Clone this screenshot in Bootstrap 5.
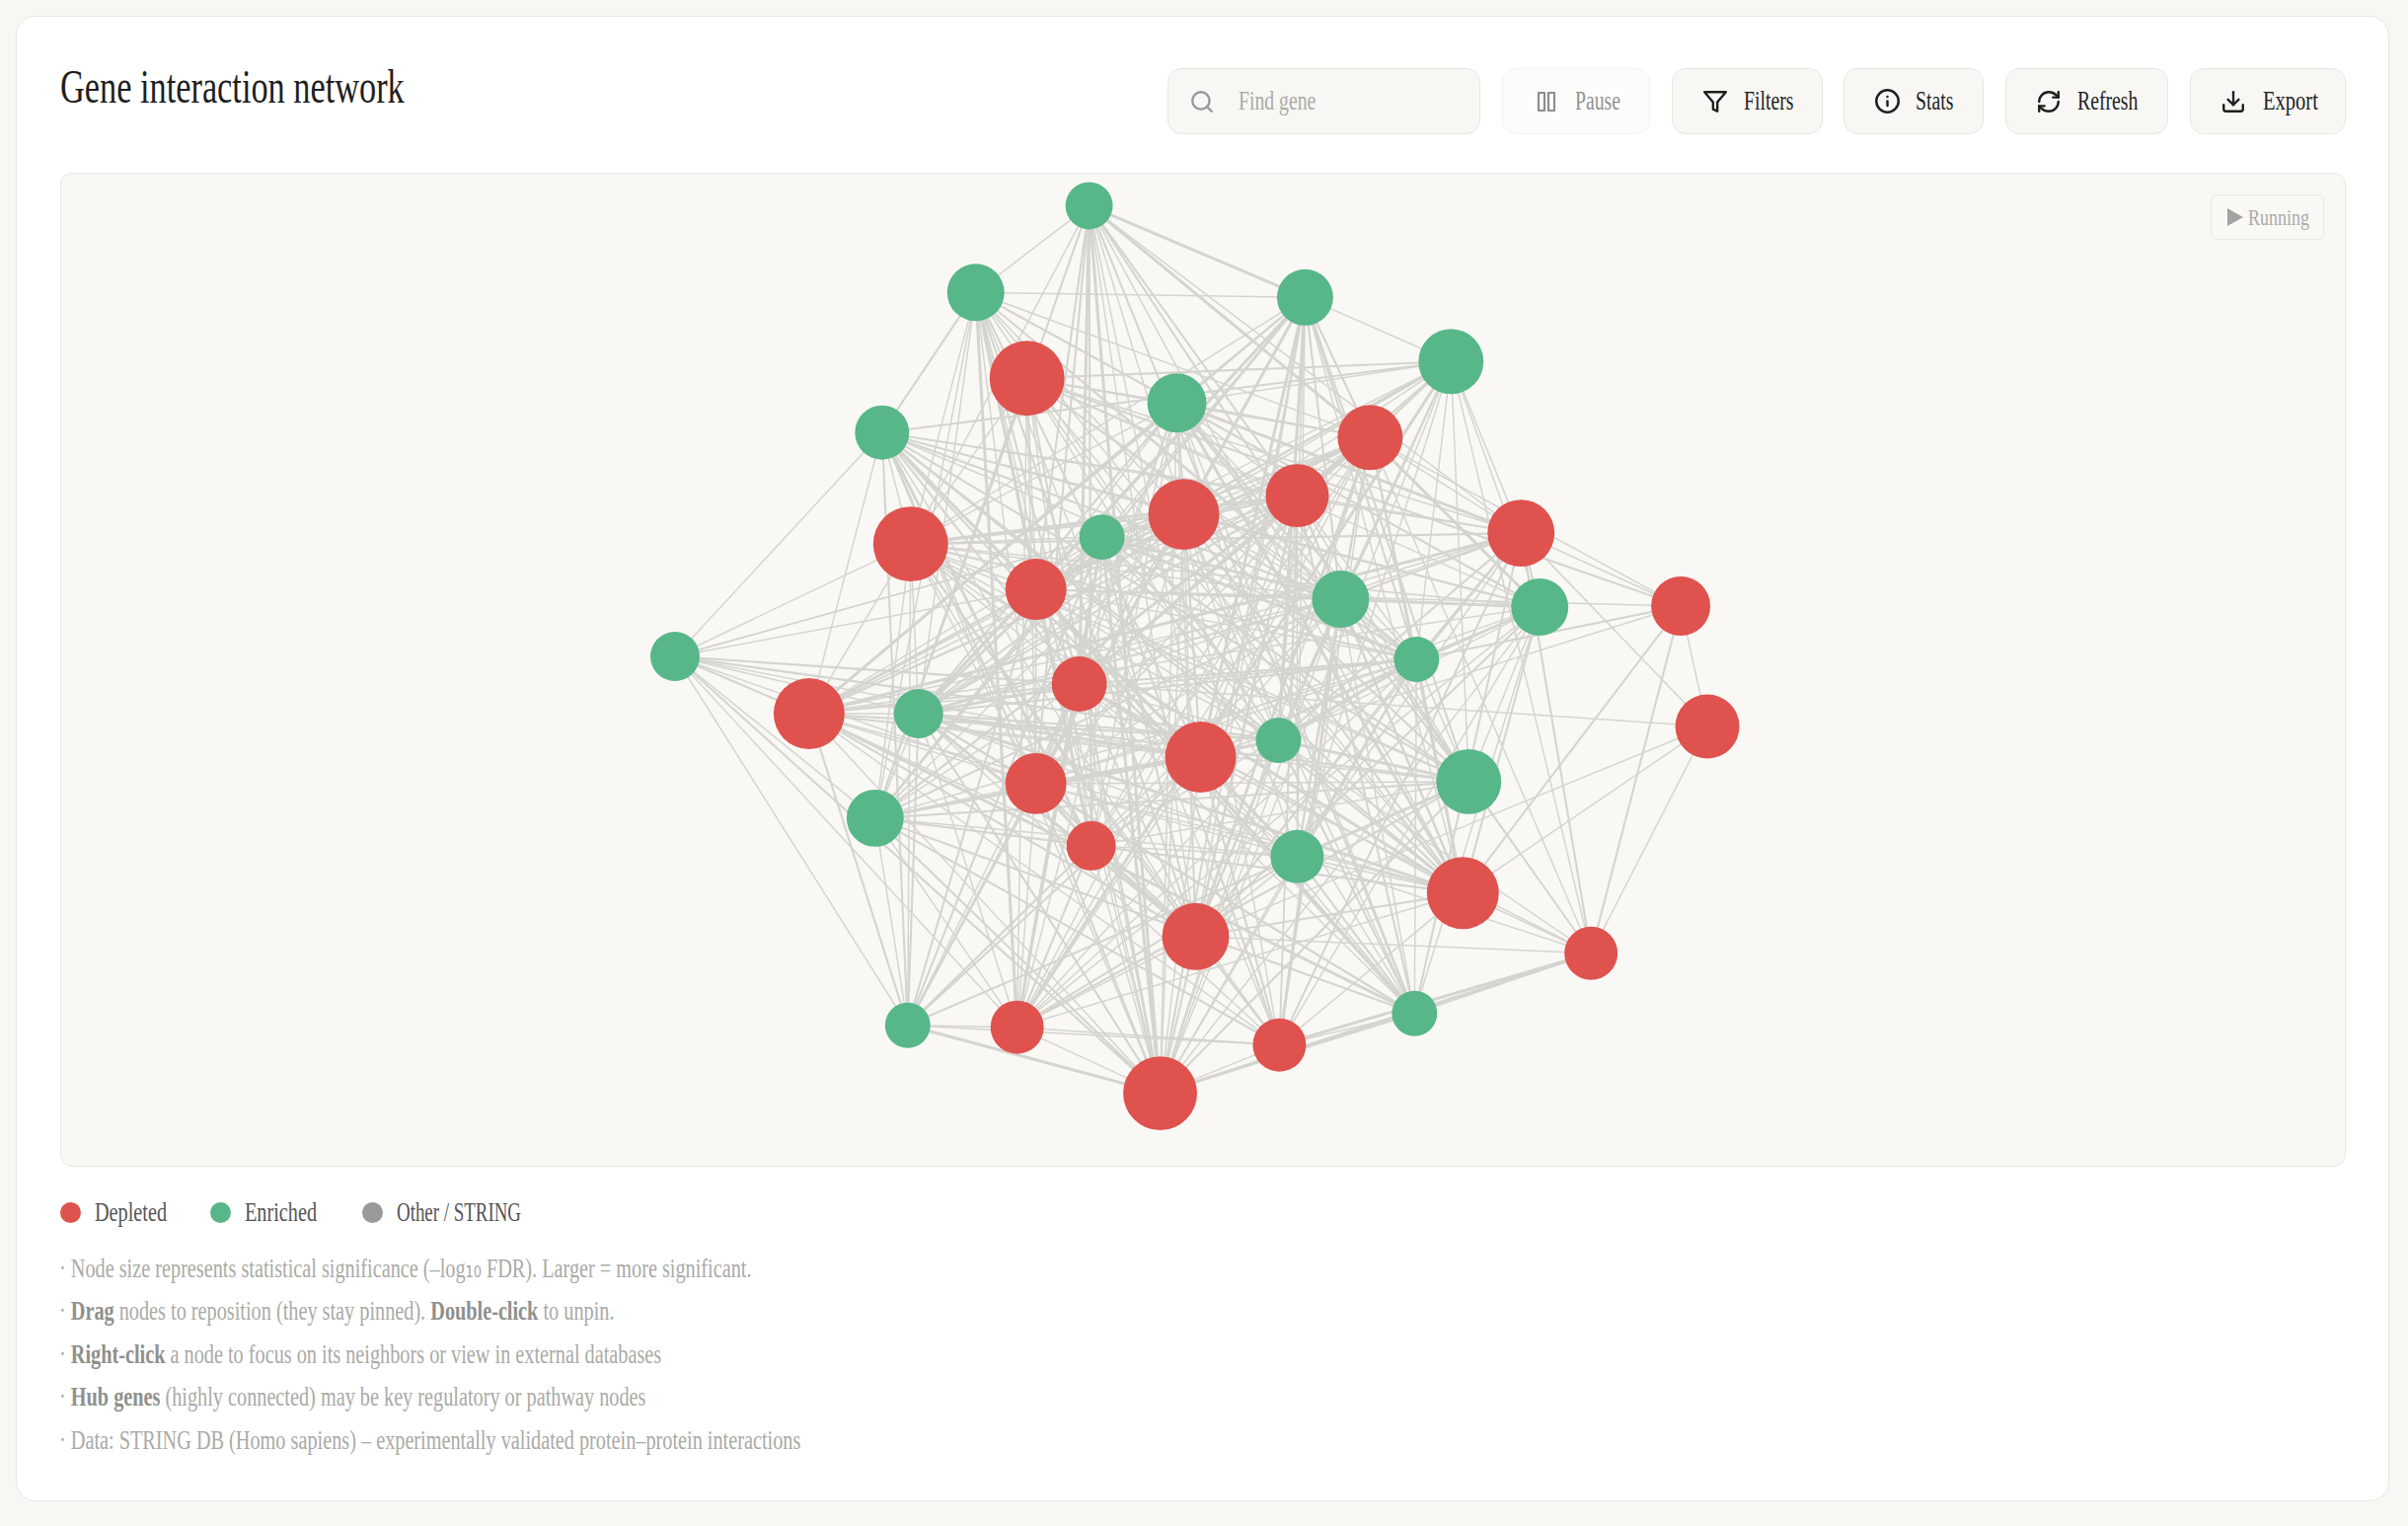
<!DOCTYPE html>
<html lang="en">
<head>
    <meta charset="UTF-8">
    <meta name="viewport" content="width=device-width, initial-scale=1.0">
    <title>Gene interaction network</title>
    <link href="https://cdn.jsdelivr.net/npm/bootstrap@5.3.0/dist/css/bootstrap.min.css" rel="stylesheet">
    <style>
        body { background: #f8f7f4; font-family: "Liberation Serif", serif; color: #1f1f1f; padding: 16px 19px 0 16px; }
        .net-card { border: 1px solid #e8e7e2; border-radius: 20px; height: 1505px; padding: 52px 43px 0 43.5px; background: #fff; }
        .net-head { height: 67px; margin-bottom: 39px; }
        .squeeze { display: inline-block; white-space: nowrap; transform: scaleX(.73); transform-origin: left center; }
        .net-title { font-family: "Liberation Serif", serif; font-size: 48px; font-weight: 400; line-height: 1; margin: -5px 0 0; }
        .net-title .squeeze { transform: scaleX(.715); }
        .tool-row { gap: 21.8px; }
        .tool-btn, .find-box { display: flex; align-items: center; height: 67px; padding: 0 0 0 30px; gap: 15px; background: #f8f7f4; border: 1px solid #e8e7e2; border-radius: 14px; font-size: 27px; color: #1f1f1f; flex: none; }
        .tool-btn:hover { background: #f8f7f4; border-color: #e8e7e2; color: #1f1f1f; }
        .tool-btn svg, .find-box svg { flex: none; fill: none; stroke: currentColor; stroke-width: 2.2; stroke-linecap: round; stroke-linejoin: round; }
        .find-box { width: 317px; padding-left: 21px; gap: 24px; color: #a9aaa6; }
        .find-box svg { color: #999; }
        .btn-pause { width: 150px; padding-left: 32px; gap: 17px; opacity: .5; background: #fbfaf8; }
        .btn-filters { width: 153px; gap: 16px; }
        .btn-stats { width: 142px; }
        .btn-refresh { width: 165px; padding-left: 30px; gap: 16px; }
        .btn-export { width: 158px; padding-left: 30px; gap: 17px; }
        .btn-export .squeeze { transform: scaleX(.76); }
        .graph-box { position: relative; height: 1007px; background: #f9f8f5; border: 1px solid #e8e7e2; border-radius: 12px; overflow: hidden; }
        .graph-box svg { display: block; width: 100%; height: 100%; }
        .run-badge { position: absolute; top: 21px; right: 21px; width: 115px; height: 46px; display: flex; align-items: center; gap: 5px; padding-left: 16px; background: #f9f8f5; border: 1px solid #e8e7e2; border-radius: 6px; font-size: 24px; color: #aaa; }
        .run-badge .squeeze { transform: scaleX(.75); }
        .run-arrow { width: 0; height: 0; border-left: 16px solid #a3a3a3; border-top: 9px solid transparent; border-bottom: 9px solid transparent; flex: none; margin-top: -1px; }
        .key-row { margin-top: 30px; height: 32px; font-size: 27px; color: #555; }
        .key-item { display: flex; align-items: center; gap: 14px; }
        .key-item .squeeze { transform: scaleX(.75); }
        .key-first { width: 152px; }
        .key-second { width: 154px; }
        .key-dot { width: 21px; height: 21px; border-radius: 50%; flex: none; }
        .dot-red { background: #e0524d; }
        .dot-green { background: #57b789; }
        .dot-grey { background: #9a9a9a; }
        .key-item.key-other .squeeze { transform: scaleX(.70); }
        .note-list { margin: 19px 0 0 -1px; font-size: 27px; line-height: 43.4px; color: #a9aaa6; }
        .note-list .squeeze { transform: scaleX(.75); }
        .note-list strong { color: #8f908c; }
        .sub-num { font-family: "DejaVu Sans", sans-serif; font-size: 27px; }
    </style>
</head>
<body>
    <div class="card net-card">
        <div class="net-head d-flex justify-content-between align-items-start">
            <h1 class="net-title"><span class="squeeze">Gene interaction network</span></h1>
            <div class="d-flex tool-row">
                <div class="find-box">
                    <svg width="26" height="26" viewBox="0 0 24 24"><circle cx="11" cy="11" r="8"/><line x1="21" y1="21" x2="16.65" y2="16.65"/></svg>
                    <span class="squeeze">Find gene</span>
                </div>
                <button class="btn tool-btn btn-pause"><svg width="24" height="24" viewBox="0 0 24 24"><rect x="4" y="3" width="6" height="18"/><rect x="14" y="3" width="6" height="18"/></svg><span class="squeeze">Pause</span></button>
                <button class="btn tool-btn btn-filters"><svg width="26" height="26" viewBox="0 0 24 24"><polygon points="22 3 2 3 10 12.46 10 19 14 21 14 12.46 22 3"/></svg><span class="squeeze">Filters</span></button>
                <button class="btn tool-btn btn-stats"><svg width="27" height="27" viewBox="0 0 24 24"><circle cx="12" cy="12" r="10"/><path d="M12 16v-4"/><path d="M12 8h.01"/></svg><span class="squeeze">Stats</span></button>
                <button class="btn tool-btn btn-refresh"><svg width="26" height="26" viewBox="0 0 24 24"><path d="M3 12a9 9 0 0 1 9-9 9.75 9.75 0 0 1 6.74 2.74L21 8"/><path d="M21 3v5h-5"/><path d="M21 12a9 9 0 0 1-9 9 9.75 9.75 0 0 1-6.74-2.74L3 16"/><path d="M8 16H3v5"/></svg><span class="squeeze">Refresh</span></button>
                <button class="btn tool-btn btn-export"><svg width="26" height="26" viewBox="0 0 24 24"><path d="M21 15v4a2 2 0 0 1-2 2H5a2 2 0 0 1-2-2v-4"/><path d="M7 10l5 5 5-5"/><path d="M12 15V3"/></svg><span class="squeeze">Export</span></button>
            </div>
        </div>

        <div class="graph-box">
            <svg id="graph" viewBox="60.5 176 2316.5 1005"></svg>
            <div class="run-badge"><span class="run-arrow"></span><span class="squeeze">Running</span></div>
        </div>

        <div class="key-row d-flex">
            <div class="key-item key-first"><span class="key-dot dot-red"></span><span class="squeeze">Depleted</span></div>
            <div class="key-item key-second"><span class="key-dot dot-green"></span><span class="squeeze">Enriched</span></div>
            <div class="key-item key-other"><span class="key-dot dot-grey"></span><span class="squeeze">Other / STRING</span></div>
        </div>

        <div class="note-list">
            <div class="squeeze d-block">· Node size represents statistical significance (–log<span class="sub-num">₁₀</span> FDR). Larger = more significant.</div>
            <div class="squeeze d-block">· <strong>Drag</strong> nodes to reposition (they stay pinned). <strong>Double-click</strong> to unpin.</div>
            <div class="squeeze d-block">· <strong>Right-click</strong> a node to focus on its neighbors or view in external databases</div>
            <div class="squeeze d-block">· <strong>Hub genes</strong> (highly connected) may be key regulatory or pathway nodes</div>
            <div class="squeeze d-block">· Data: STRING DB (Homo sapiens) – experimentally validated protein–protein interactions</div>
        </div>
    </div>

    <script>
        // [x, y, r, depleted?, weight] in page pixels
        const nodes = [
            [1103,208,24,0,.72],[988,296,29,0,.75],[1322,301,28.5,0,.85],[1470,366,33,0,.8],
            [1040,383,38,1,.75],[1192,408,30,0,.85],[893,438,27.5,0,.8],[1388,443,33,1,.95],
            [1314,502,32,1,.95],[1199,521,36,1,1],[922,551,38,1,1],[1116,544,23,0,.95],
            [1541,540,34,1,.62],[1049,597,31,1,1],[1358,607,29,0,.95],[1560,615,29,0,.85],
            [1703,614,30,1,0],[683,665,25,0,0],[1435,668,23,0,1],[1093,693,28,1,1],
            [819,723,36,1,1],[930,723,25,0,1],[1730,736,32.5,1,0],[1295,750,23,0,1],
            [1216,767,36,1,1],[1488,792,33,0,.9],[1049,794,31,1,1],[886,829,29,0,.85],
            [1105,857,25,1,.95],[1314,868,27,0,.95],[1482,905,36.5,1,.9],[1211,949,34,1,.9],
            [1612,966,27,1,0],[919,1039,23,0,0],[1030,1041,27,1,.7],[1433,1027,23,0,.72],
            [1296,1059,27,1,.75],[1175,1108,37.5,1,.8]
        ];

        // nodes on the sparse rim get their links listed by hand
        const rimLinks = {
            16: [12,7,18,22,32,30,24,13,4],
            17: [6,10,20,21,27,33,34,11,13,19,24,26,37,9,23],
            22: [16,12,32,30,31,19],
            32: [16,22,30,25,12,3,7,35,36,31,24,29,37,14,23],
            33: [17,20,27,21,10,6,34,13,19,26,28,11,24,37,36,29,9]
        };

        const hull = [[0,1],[0,2],[2,3],[3,12],[1,6],[12,16],[35,32],[35,36],[36,37],[37,34],[34,33]];

        // small seeded generator so the drawing stays the same on each load
        let seed = 20417;
        function rnd() {
            seed = (seed + 0x6D2B79F5) | 0;
            let t = Math.imul(seed ^ (seed >>> 15), 1 | seed);
            t = (t + Math.imul(t ^ (t >>> 7), 61 | t)) ^ t;
            return ((t ^ (t >>> 14)) >>> 0) / 4294967296;
        }

        const links = [];
        const seen = new Set();
        function addLink(a, b) {
            const key = Math.min(a, b) + '-' + Math.max(a, b);
            if (a !== b && !seen.has(key)) { seen.add(key); links.push([a, b]); }
        }
        hull.forEach(l => addLink(l[0], l[1]));
        Object.keys(rimLinks).forEach(k => rimLinks[k].forEach(o => addLink(+k, o)));
        for (let i = 0; i < nodes.length; i++) {
            for (let j = i + 1; j < nodes.length; j++) {
                if (rimLinks[i] || rimLinks[j]) continue;
                if (rnd() < nodes[i][4] * nodes[j][4] * .92) addLink(i, j);
            }
        }

        let out = '';
        links.forEach(l => {
            const a = nodes[l[0]], b = nodes[l[1]], roll = rnd();
            const w = roll < .6 ? 1.5 : roll < .9 ? 2.1 : 3;
            out += `<line x1="${a[0]}" y1="${a[1]}" x2="${b[0]}" y2="${b[1]}" stroke="#d4d4d0" stroke-width="${w}"/>`;
        });
        nodes.forEach(n => {
            out += `<circle cx="${n[0]}" cy="${n[1]}" r="${n[2]}" fill="${n[3] ? '#e0524d' : '#57b789'}"/>`;
        });
        document.getElementById('graph').innerHTML = out;
    </script>
    <script src="https://cdn.jsdelivr.net/npm/bootstrap@5.3.0/dist/js/bootstrap.bundle.min.js"></script>
</body>
</html>
